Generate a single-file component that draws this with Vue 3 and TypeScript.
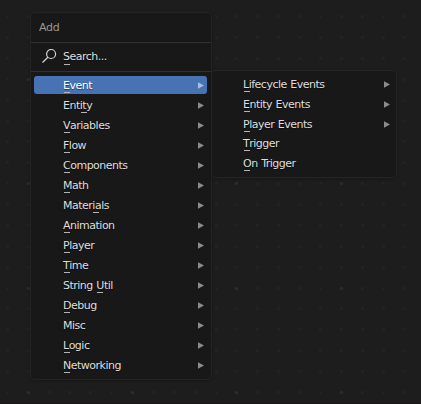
<script setup lang="ts">
interface Item {
  label: string
  key: number
  leaf?: boolean
  nudge?: boolean
}

const items: Item[] = [
  { label: 'Event', key: 0 },
  { label: 'Entity', key: 3 },
  { label: 'Variables', key: 0 },
  { label: 'Flow', key: 0 },
  { label: 'Components', key: 0 },
  { label: 'Math', key: 0 },
  { label: 'Materials', key: 5 },
  { label: 'Animation', key: 0 },
  { label: 'Player', key: 0 },
  { label: 'Time', key: 0 },
  { label: 'String Util', key: 7 },
  { label: 'Debug', key: 0 },
  { label: 'Misc', key: -1 },
  { label: 'Logic', key: 0 },
  { label: 'Networking', key: 0 },
]

const subItems: Item[] = [
  { label: 'Lifecycle Events', key: 0 },
  { label: 'Entity Events', key: 0 },
  { label: 'Player Events', key: 0 },
  { label: 'Trigger', key: 0, leaf: true, nudge: true },
  { label: 'On Trigger', key: 0, leaf: true },
]

const before = (i: Item) => (i.key < 0 ? i.label : i.label.slice(0, i.key))
const mnemonic = (i: Item) => (i.key < 0 ? '' : i.label[i.key])
const after = (i: Item) => (i.key < 0 ? '' : i.label.slice(i.key + 1))

const xs = [7, 28, 49, 69, 90, 111, 132, 153, 174, 195, 216, 236, 257, 278, 299, 320, 341, 362, 383, 404]
const ys = [16, 37, 58, 79, 100, 121, 141, 162, 183, 204, 225, 246, 267, 288, 308, 329, 350, 371, 392]
const dots = xs.flatMap((x, i) =>
  ys.map((y, j) => ({ x: x - 1, y: y - 1, major: i % 5 === 1 && j % 5 === 3 })),
)
</script>

<template>
  <main class="editor">
    <svg class="grid" width="421" height="404">
      <rect v-for="(d, i) in dots" :key="i" :x="d.x" :y="d.y" width="3" height="3" :class="{ major: d.major }" />
    </svg>
    <div class="menus">
      <section class="menu">
        <header class="title">Add</header>
        <div class="search">
          <svg class="lens" width="16" height="16" viewBox="0 0 16 16">
            <circle cx="9.1" cy="6" r="4.5" />
            <path d="M5.9 9.2 0.5 14.5" />
          </svg>
          <span class="label"><span class="mn">S</span>earch...</span>
        </div>
        <ul class="list">
          <li v-for="(it, i) in items" :key="it.label" class="row" :class="{ active: i === 0 }">
            <span class="label">{{ before(it) }}<span v-if="it.key >= 0" class="mn">{{ mnemonic(it) }}</span>{{ after(it) }}</span>
            <svg class="arrow" width="6" height="7" viewBox="0 0 6 7"><path d="M0 0.2 6 3.5 0 6.8Z" /></svg>
          </li>
        </ul>
      </section>
      <section class="menu sub">
        <ul class="list">
          <li v-for="it in subItems" :key="it.label" class="row" :class="{ nudge: it.nudge }">
            <span class="label">{{ before(it) }}<span class="mn">{{ mnemonic(it) }}</span>{{ after(it) }}</span>
            <svg v-if="!it.leaf" class="arrow" width="6" height="7" viewBox="0 0 6 7"><path d="M0 0.2 6 3.5 0 6.8Z" /></svg>
          </li>
        </ul>
      </section>
    </div>
  </main>
</template>

<style>
body {
  background: #1d1d1d;
  overflow: hidden;
}
</style>

<style scoped>
.editor {
  position: relative;
  box-sizing: border-box;
  width: 421px;
  height: 404px;
  padding: 12px 0 0 30px;
  background: #1d1d1d;
  border-bottom: 1px solid #181617;
  font: 11px/18px "DejaVu Sans", sans-serif;
  letter-spacing: -0.5px;
  word-spacing: 0.5px;
  color: #dedede;
}
.grid {
  position: absolute;
  left: 0;
  top: 0;
}
.grid rect {
  fill: #222;
}
.grid rect.major {
  fill: #2a2a2a;
}
.menus {
  position: relative;
  display: flex;
  align-items: flex-start;
}
.menu {
  box-sizing: border-box;
  width: 182px;
  height: 368px;
  background: #181818;
  border: 1px solid #242424;
  border-radius: 4px;
  box-shadow: 0 1px 3px rgba(0, 0, 0, 0.2);
}
.title {
  height: 29px;
  line-height: 29px;
  padding-left: 8px;
  color: #999;
  letter-spacing: -0.3px;
  border-bottom: 1px solid #303030;
}
.search {
  display: flex;
  height: 28px;
  padding-left: 11px;
  line-height: 28px;
  border-bottom: 1px solid #303030;
}
.lens {
  width: 16px;
  margin: 5px 5px 0 0;
  fill: none;
  stroke: #d4d4d4;
  stroke-width: 1.2;
}
.list {
  display: flex;
  flex-direction: column;
  gap: 2px;
  list-style: none;
  margin: 0;
  padding: 4px 4px 0 3px;
}
.row {
  display: flex;
  align-items: center;
  justify-content: space-between;
  height: 18px;
  padding: 0 3px 0 29px;
  border-radius: 3px;
}
.row.active {
  background: #4772b3;
  color: #fff;
}
.label {
  white-space: pre;
  text-shadow: 0 1px 1px rgba(0, 0, 0, 0.45);
}
.row .label {
  padding-top: 2px;
}
.mn {
  position: relative;
}
.mn::after {
  content: "";
  position: absolute;
  left: 1px;
  bottom: -2px;
  width: 6px;
  height: 1px;
  background: #b4b4b4;
}
.row .mn::after {
  bottom: -1px;
}
.arrow {
  fill: #8c8c8c;
}
.active .arrow {
  fill: #a9bddd;
}
.sub {
  width: 186px;
  height: 108px;
  margin: 58px 0 0 -1px;
}
.sub .row {
  padding-left: 28px;
}
.sub .list {
  padding-right: 3px;
}
.sub .nudge {
  margin-top: -1px;
}
</style>
